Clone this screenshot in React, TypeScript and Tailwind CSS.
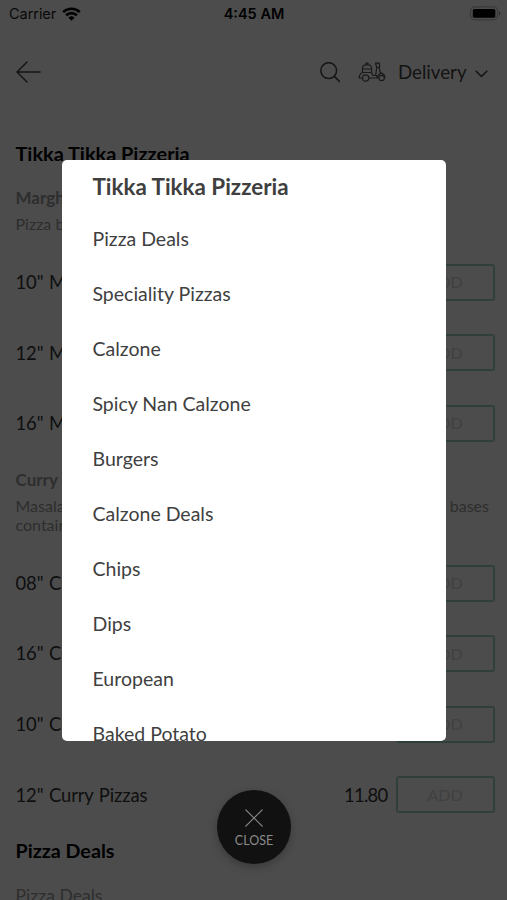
import React from "react";

const categories = [
  "Pizza Deals",
  "Speciality Pizzas",
  "Calzone",
  "Spicy Nan Calzone",
  "Burgers",
  "Calzone Deals",
  "Chips",
  "Dips",
  "European",
  "Baked Potato",
];

function StatusBar() {
  return (
    <div className="flex h-7 items-center justify-between pl-[9px] pr-[6px] font-['Inter','Liberation_Sans',sans-serif] text-black">
      <div className="flex w-[120px] items-center gap-[6px]">
        <span className="text-[14.500px] leading-7 tracking-[-0.05px] text-[#222]">Carrier</span>
        <svg className="-mt-px" width="19" height="14" viewBox="0 0 19 14" fill="none" stroke="#000" strokeWidth="2.6">
          <path d="M1.2 5.1a12 12 0 0 1 16.6 0" />
          <path d="M4.1 8.3a7.8 7.8 0 0 1 10.8 0" />
          <path d="M9.5 13.8 6.4 10.7a4.5 4.5 0 0 1 6.2 0z" fill="#000" stroke="none" />
        </svg>
      </div>
      <span className="mr-[2px] text-[14.500px] font-semibold leading-7">4:45 AM</span>
      <div className="flex w-[120px] justify-end">
        <svg className="-mt-[2px]" width="31" height="15" viewBox="0 0 31 15">
          <rect x="0.6" y="0.8" width="27" height="13" rx="4" fill="none" stroke="#c0c0c0" strokeWidth="1.2" />
          <rect x="2.8" y="3" width="22.500" height="8.800" rx="1.500" fill="#000" />
          <path d="M29 5.2c1.6.6 1.6 3.6 0 4.2z" fill="#888" />
        </svg>
      </div>
    </div>
  );
}

function Header() {
  return (
    <div className="flex h-[88px] items-center pl-4 pr-[18px] text-[#444]">
      <svg width="25" height="22" viewBox="0 0 25 22" fill="none" stroke="currentColor" strokeWidth="1.5" strokeLinecap="round" strokeLinejoin="round">
        <path d="M24 11H1M11 1 1 11l10 10" />
      </svg>
      <div className="ml-auto flex items-center">
        <svg width="21" height="21" viewBox="0 0 21 21" fill="none" stroke="currentColor" strokeWidth="1.5" strokeLinecap="round">
          <circle cx="9.7" cy="8.6" r="7.900" />
          <path d="m15.400 14.400 5 5" />
        </svg>
        <svg className="ml-[18px]" width="28" height="20" viewBox="0 0 28 20" fill="none" stroke="#555" strokeWidth="1.2" strokeLinecap="round" strokeLinejoin="round">
          <path d="M4.500 10.500h9V6c0-2-1.300-3.200-3-3.200h-3c-1.700 0-3 1.200-3 3.200zM4.500 7h9M8 2.800V1.200h2v1.600" />
          <path d="M4.500 10.500C2.500 11.500 1.200 13.500 1.200 16h3.300a3.200 3.200 0 0 0 6.400 0h8.600M13.500 10.500l1.500 3h3.500" />
          <path d="M4.500 16a3.200 3.200 0 0 1 6.400 0" />
          <path d="M17.500 1.200h4v4.300h-2.800zM18.700 5.500l-1 7.500M21 5.500l1.200 4.500 3 2.500M18.500 13.500c.5 1.500.8 2.500 1 2.500M19.500 16c.3-3 2-5 4.500-4.500 1.800.4 2.800 2 2.800 4" />
          <circle cx="23.600" cy="16" r="2.700" />
        </svg>
        <span className="ml-[12px] w-[68px] text-[18.700px] leading-7">Delivery</span>
        <svg className="ml-[9px] mr-px mt-[3px]" width="13" height="8" viewBox="0 0 13 8" fill="none" stroke="currentColor" strokeWidth="1.6" strokeLinecap="round" strokeLinejoin="round">
          <path d="m1.200 1.200 5.300 5.300 5.300-5.300" />
        </svg>
      </div>
    </div>
  );
}

function MenuRow({ name, price }: { name: string; price?: string }) {
  return (
    <div className="flex h-[70.600px] items-center pl-[15.500px] pr-[12.500px] text-[18.400px] text-[#333]">
      <span className="pt-px tracking-[-0.1px] [word-spacing:1px]">{name}</span>
      <span className="ml-auto mr-[8px] pt-px tracking-[-0.7px]">{price}</span>
      <button className="h-[37px] w-[99px] rounded-[3px] border-2 border-[#a5d3c1] text-[16px] text-[#d6d6d6]">
        ADD
      </button>
    </div>
  );
}

function CategoryModal() {
  return (
    <div className="absolute left-[62px] top-[160px] h-[581px] w-[384px] overflow-hidden rounded-[5px] bg-white pl-[30.500px] text-[#3f3f3f]">
      <h2 className="h-[52px] text-[22.400px] font-bold leading-[53px]">Tikka Tikka Pizzeria</h2>
      <ul>
        {categories.map((c) => (
          <li key={c} className="h-[55px] text-[19.500px] leading-[54px]">
            {c}
          </li>
        ))}
      </ul>
    </div>
  );
}

function CloseButton() {
  return (
    <button className="absolute left-[217px] top-[790px] flex h-[74px] w-[74px] flex-col items-center rounded-full bg-[#111] pt-[19px] text-[#8a8a8a] shadow-[0_3px_8px_rgba(0,0,0,0.25)]">
      <svg width="18" height="18" viewBox="0 0 18 18" stroke="currentColor" strokeWidth="1.200" strokeLinecap="round">
        <path d="m.8.8 16.400 16.400M17.200.8.8 17.200" />
      </svg>
      <span className="mt-[5px] text-[12.500px] leading-[18px]">CLOSE</span>
    </button>
  );
}

export default function App() {
  return (
    <div className="relative h-[900px] w-[507px] overflow-hidden bg-white font-['Lato',sans-serif]">
      <StatusBar />
      <Header />
      <h1 className="mt-[23px] h-7 pl-[15.500px] text-[19.900px] font-bold leading-7 text-black">Tikka Tikka Pizzeria</h1>
      <div className="mt-[18px] h-[62px] pl-[15.500px] text-[#999]">
        <h3 className="text-[17px] font-bold leading-[26px]">Margherita</h3>
        <p className="text-[16px] leading-[26px]">Pizza base</p>
      </div>
      <MenuRow name={'10" Margherita'} />
      <MenuRow name={'12" Margherita'} />
      <MenuRow name={'16" Margherita'} />
      <div className="mt-[8px] h-[81px] pl-[15.500px] pr-[18px] text-[#999]">
        <h3 className="text-[17px] font-bold leading-[26px]">Curry Pizzas</h3>
        <div className="mt-[3px] flex justify-between text-[16px] leading-[19px]">
          <p>
            Masala
            <br />
            containing
          </p>
          <p>bases</p>
        </div>
      </div>
      <MenuRow name={'08" Curry Pizzas'} />
      <MenuRow name={'16" Curry Pizzas'} />
      <MenuRow name={'10" Curry Pizzas'} />
      <MenuRow name={'12" Curry Pizzas'} price="11.80" />
      <h1 className="mt-[6.500px] h-7 pl-[15.500px] text-[19.700px] font-bold leading-7 text-black">Pizza Deals</h1>
      <h3 className="mt-[17px] pl-[15.500px] text-[17.600px] leading-[27px] text-[#999]">Pizza Deals</h3>
      <div className="absolute inset-0 bg-black/70" />
      <CategoryModal />
      <CloseButton />
    </div>
  );
}
